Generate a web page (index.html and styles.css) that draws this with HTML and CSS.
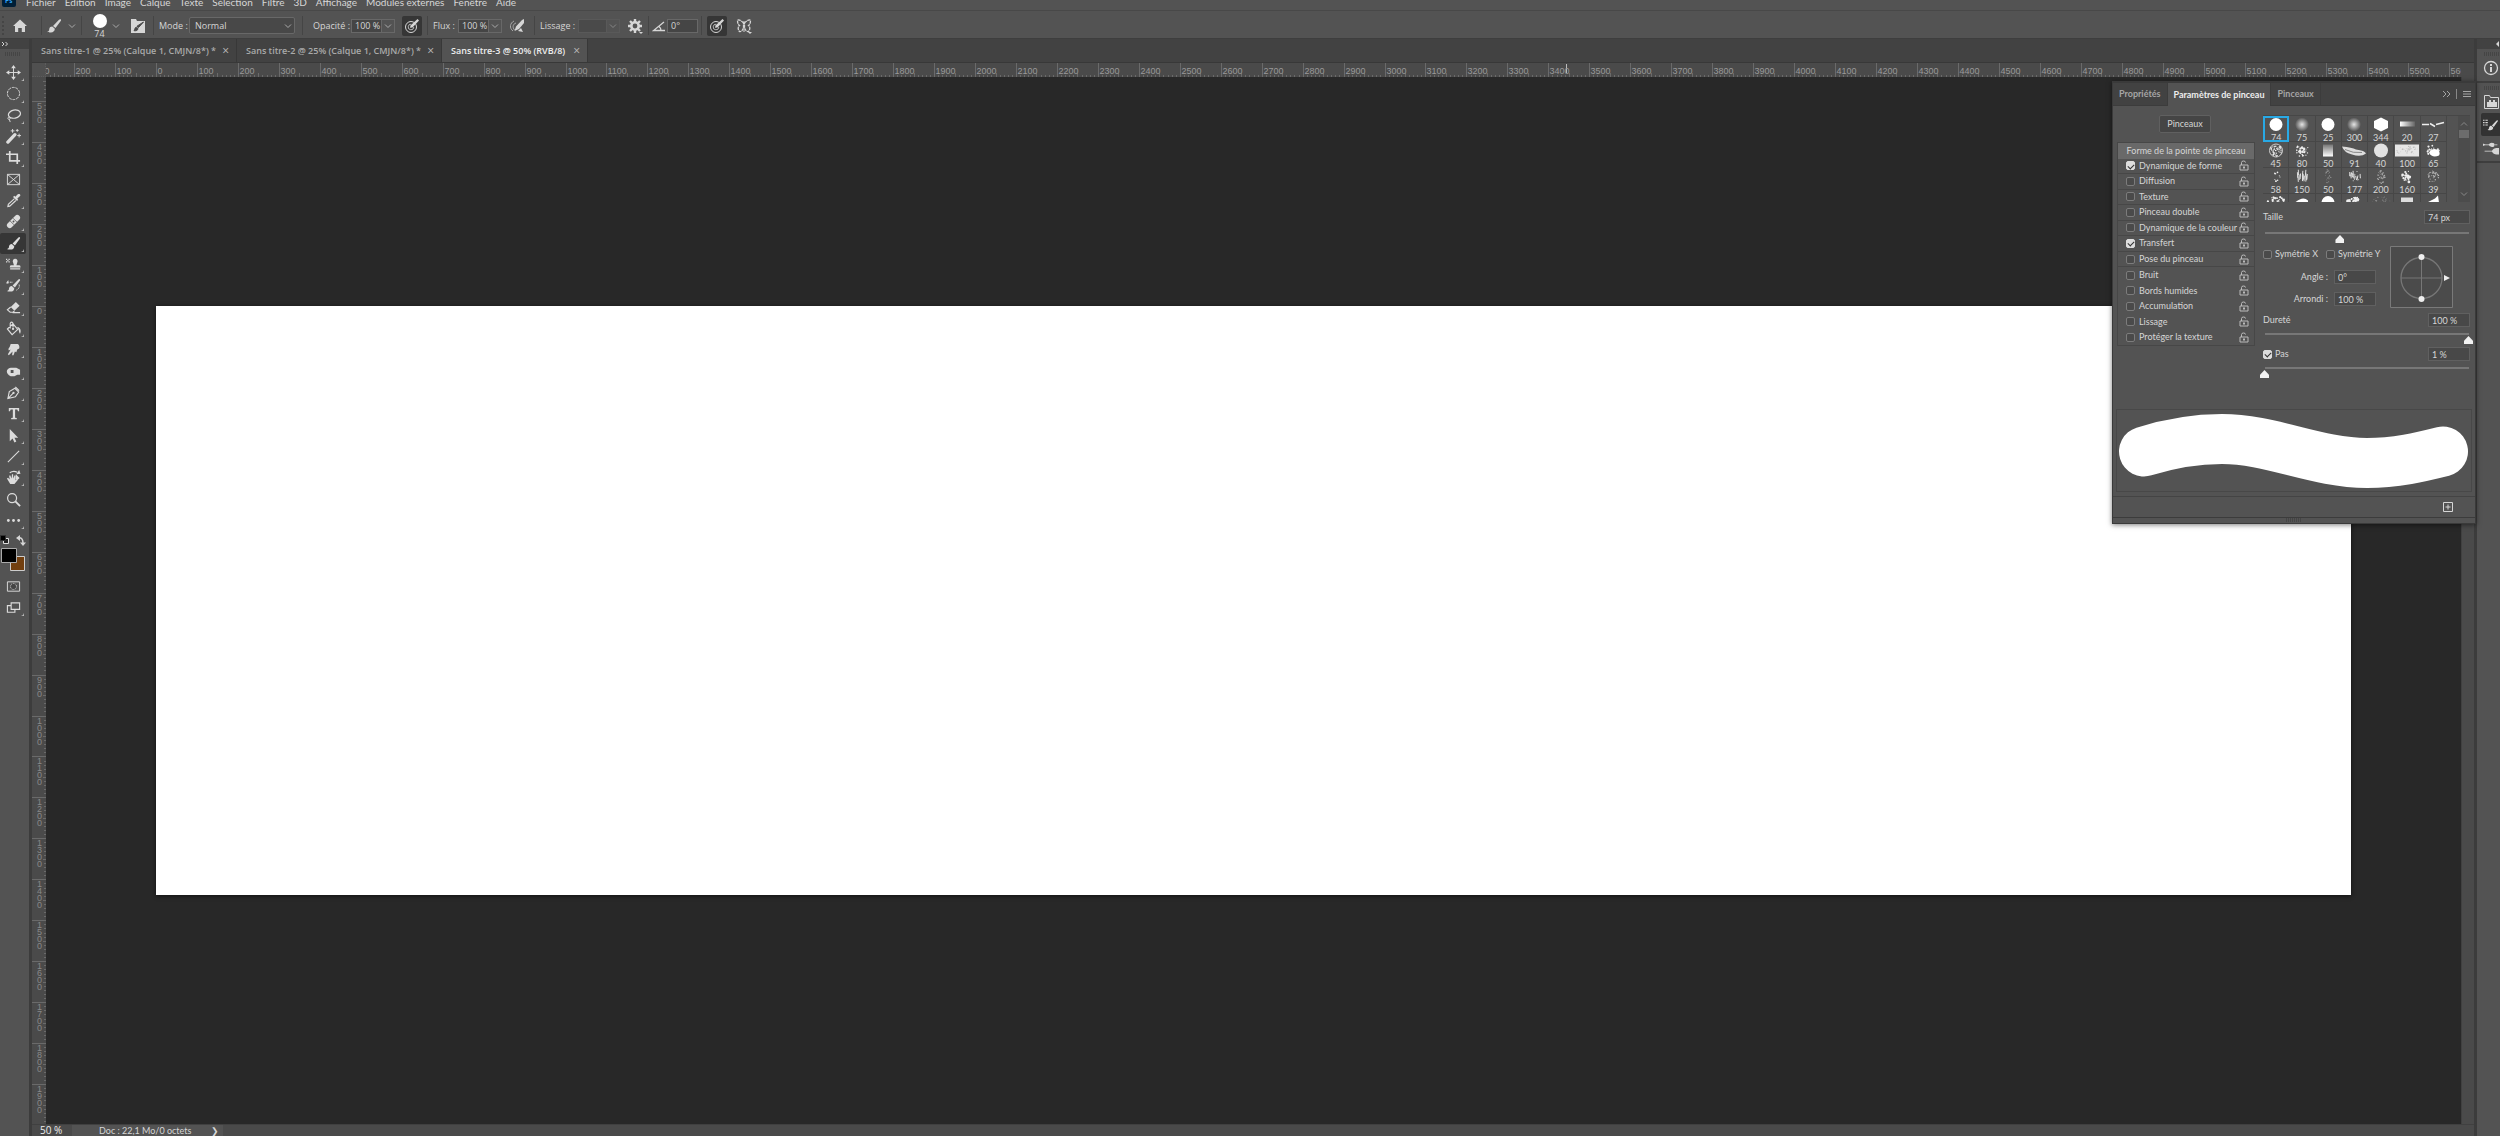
FILE: index.html
```html
<!DOCTYPE html>
<html lang="fr">
<head>
  <meta charset="UTF-8">
  <meta name="viewport" content="width=device-width, initial-scale=1.0">
  <title>Sans titre-3 @ 50% (RVB/8)</title>
  <link rel="stylesheet" href="styles.css">
</head>
<body>
  <svg class="defs" aria-hidden="true">
    <symbol id="chev" viewBox="0 0 8 8"><path d="M1 2.5 4 5.500 7 2.500" fill="none" stroke="currentColor"/></symbol>
    <symbol id="brush" viewBox="0 0 16 16"><path d="M14.500 1.200c.8.300.7 1 .2 1.700L9.500 10 7 8l6-6.200c.5-.5 1-.8 1.500-.6zM6.300 8.600l2.500 2.200c.2 2-1.500 3.700-4 3.700-1.300 0-2.800 0-3.500-.7C3.500 13 3 12 3.300 10.700c.3-1.400 1.700-2.200 3-2.100z"/></symbol>
    <symbol id="lock" viewBox="0 0 10 11"><path d="M1 5h8v5H1zM2.500 5V2.500Q2.500 1 4.500 1T6.500 2.500" fill="none" stroke="currentColor"/><path d="M4 6.500h2v2H4z"/></symbol>
    <symbol id="target" viewBox="0 0 16 16"><circle cx="7" cy="9" r="5.500" fill="none" stroke="currentColor"/><path d="M6 9.800 6.500 7.500 13.500 1l1.500 1.500L8.500 9.500z"/><path d="M9.800 9a2.800 2.800 0 1 1-2.500-2.800" fill="none" stroke="currentColor" stroke-width=".8"/></symbol>
  </svg>

  <nav class="menubar">
    <svg class="logo" viewBox="0 0 14 12"><rect width="14" height="12" rx="2" fill="#001e36"/><text x="3" y="8">Ps</text></svg>
    <ul>
      <li><a href="#">Fichier</a></li>
      <li><a href="#">Edition</a></li>
      <li><a href="#">Image</a></li>
      <li><a href="#">Calque</a></li>
      <li><a href="#">Texte</a></li>
      <li><a href="#">Sélection</a></li>
      <li><a href="#">Filtre</a></li>
      <li><a href="#">3D</a></li>
      <li><a href="#">Affichage</a></li>
      <li><a href="#">Modules externes</a></li>
      <li><a href="#">Fenêtre</a></li>
      <li><a href="#">Aide</a></li>
    </ul>
  </nav>

  <header class="options">
    <div class="group home">
      <button aria-label="Accueil"><svg viewBox="0 0 16 16"><path d="M8 1.500 15 8h-2v6H9.800v-4H6.200v4H3V8H1z"/></svg></button>
    </div>
    <div class="group tool">
      <button aria-label="Outil Pinceau"><svg viewBox="0 0 16 16"><use href="#brush"/></svg></button>
      <svg class="chev"><use href="#chev"/></svg>
    </div>
    <div class="group preset">
      <button class="tip" aria-label="Forme prédéfinie"><i></i><span>74</span></button>
      <svg class="chev"><use href="#chev"/></svg>
      <button aria-label="Paramètres de pinceau"><svg viewBox="0 0 16 16"><path d="M1 1h5l1 2h8v12H1z"/><path d="m13.500 4-5 5.500L7 8.200zM6.500 9.200 8 10.500c0 2-2 2.500-4 2.200 1-.7.500-3.500 2.500-3.500z" fill="#484848" stroke="#484848"/></svg></button>
    </div>
    <div class="group mode">
      <label for="mode">Mode :</label>
      <div class="select"><select id="mode"><option>Normal</option></select><svg class="chev"><use href="#chev"/></svg></div>
    </div>
    <div class="group opacity">
      <label for="opacity">Opacité :</label>
      <div class="combo"><input id="opacity" value="100 %"><button aria-label="Opacité"><svg class="chev"><use href="#chev"/></svg></button></div>
      <button class="on" aria-label="Pression sur l’opacité"><svg viewBox="0 0 16 16"><use href="#target"/></svg></button>
    </div>
    <div class="group flow">
      <label for="flow">Flux :</label>
      <div class="combo"><input id="flow" value="100 %"><button aria-label="Flux"><svg class="chev"><use href="#chev"/></svg></button></div>
      <button aria-label="Aérographe"><svg viewBox="0 0 16 16"><path d="M5 3C1 5 0 10 4 13M7 5C4 6 3 9 5.500 12" fill="none" stroke="#aaa"/><path d="M15 1 13 2 7 8.500 5.500 13 10 11l5-6zM12 10l2 4-5-1z"/></svg></button>
    </div>
    <div class="group smooth">
      <label for="smooth">Lissage :</label>
      <div class="combo off"><input id="smooth" disabled><button disabled aria-label="Lissage"><svg class="chev"><use href="#chev"/></svg></button></div>
      <button aria-label="Options de lissage"><svg viewBox="0 0 16 16"><circle cx="8" cy="8" r="3.700" fill="none" stroke="currentColor" stroke-width="2.600"/><path d="M8 1v3M8 12v3M1 8h3M12 8h3M3 3l2 2M11 11l2 2M3 13l2-2M11 5l2-2" stroke="currentColor" stroke-width="2.400"/><path d="M12 14h4l-2 2z"/></svg></button>
    </div>
    <div class="group angle">
      <label for="angle" aria-label="Angle"><svg viewBox="0 0 14 14"><path d="M12 3 1.500 11.500H13M7 7.500q2 1.500 2 4" fill="none" stroke="currentColor" stroke-width="1.300"/></svg></label>
      <input id="angle" value="0°">
    </div>
    <div class="group last">
      <button class="on" aria-label="Pression sur la taille"><svg viewBox="0 0 16 16"><use href="#target"/></svg></button>
      <button aria-label="Symétrie"><svg viewBox="0 0 16 16"><path d="M7.500 5C5 2 2 1.500 1.500 2.500c0 2 .5 4 2 5C1.500 9 2 12 3.500 13.500 5.500 14 7 12 7.500 9zM8.500 5c2.500-3 5.500-3.500 6-2.500 0 2-.5 4-2 5 2 1.500 1.500 4.500 0 6C10.500 14 9 12 8.500 9z" fill="none" stroke="currentColor" stroke-width="1.300" stroke-dasharray="3 .6"/><path d="M7.500 3h1v11h-1zM12 14h4l-2 2z"/></svg></button>
    </div>
  </header>

  <main class="workspace">
    <aside class="toolbar">
      <button class="collapse" aria-label="Agrandir">
        <svg viewBox="0 0 8 6"><path d="m1 1 2 2-2 2M4.500 1l2 2-2 2" fill="none" stroke="currentColor"/></svg>
      </button>
      <div class="grip"></div>
      <div class="tools">
        <button class="more" aria-label="Déplacement"><svg viewBox="0 0 16 16"><path d="M8 2v12M2 8h12" stroke="currentColor"/><path d="M8 0l2.500 3.500h-5zM8 16l2.500-3.500h-5zM0 8l3.500-2.500v5zM16 8l-3.500-2.500v5z"/></svg></button>
        <button class="more" aria-label="Ellipse de sélection"><svg viewBox="0 0 16 16"><circle cx="8" cy="8" r="6.500" fill="none" stroke="currentColor" stroke-dasharray="3 1"/></svg></button>
        <button class="more" aria-label="Lasso"><svg viewBox="0 0 16 16"><ellipse cx="9" cy="6.500" rx="6.500" ry="4.300" transform="rotate(-12 9 6.500)" fill="none" stroke="currentColor" stroke-width="1.300"/><path d="M3.500 9.500c-2 .5-2 3 0 2.500s1-2.500 0-2.500M3.500 12l1 3" fill="none" stroke="currentColor"/></svg></button>
        <button class="more" aria-label="Baguette magique"><svg viewBox="0 0 16 16"><path d="m2 14 7.500-8" stroke="currentColor" stroke-width="3.500" stroke-linecap="round"/><path d="M7 0v4M5 2h4M12 0v3M10.500 1.500h3M14 5v4M12 7h4" stroke="currentColor"/></svg></button>
        <button class="more" aria-label="Recadrage"><svg viewBox="0 0 16 16"><path d="M4 1v10.500h11M0 4.500h12V15" fill="none" stroke="currentColor" stroke-width="1.800"/></svg></button>
        <button aria-label="Image"><svg viewBox="0 0 16 16"><path d="M1.500 2.500h13v11h-13zM1.500 2.500l13 11M14.500 2.500l-13 11" fill="none" stroke="currentColor"/></svg></button>
        <button class="more" aria-label="Pipette"><svg viewBox="0 0 16 16"><path d="M15 1.500c-1-1-2.500-.5-3.500 1L10 4 8.800 3 7.500 4.300l4.200 4.200L13 7.200 12 6l1.500-1.500c1.500-1 2.300-2 1.500-3z"/><path d="m9 6-6.500 6L2 14.500l2-.5L10.500 8" fill="none" stroke="currentColor" stroke-width="1.200"/></svg></button>
        <button class="more" aria-label="Correcteur"><svg viewBox="0 0 16 16"><path d="m4 12 8-8" stroke="currentColor" stroke-width="6" stroke-linecap="round"/><path d="m4.500 7.500 4 4M7.500 4.500l4 4" stroke="#535353" stroke-width=".8"/><circle cx="8" cy="8" r="1" fill="#535353"/></svg></button>
        <button class="more on" aria-label="Pinceau"><svg viewBox="0 0 16 16"><use href="#brush"/></svg></button>
        <button class="more" aria-label="Tampon"><svg viewBox="-2 0 18 16"><path d="M9 1a3 3 0 0 1 2.500 4.500L10.500 9H14q1.500 0 1.500 2.500h-13Q2.500 9 4 9h3.500l-1-3.500A3 3 0 0 1 9 1zM3 12.500h12V14H3z"/><path d="M-2 1h1.500v1.500H-2zM1 1h1.500v1.500H1zM-.5 2.500H1V4H-.5zM-2 4h1.500v1.500H-2zM1 4h1.500v1.500H1z"/></svg></button>
        <button class="more" aria-label="Forme d’historique"><svg viewBox="0 0 16 16"><use href="#brush"/><path d="M1 4.500h6.500M14 7q1 4-3 6" fill="none" stroke="currentColor" stroke-dasharray="2 1"/><path d="M0 5.500 2.500 2v4z"/></svg></button>
        <button class="more" aria-label="Gomme"><svg viewBox="0 0 16 16"><path d="m10.500 2 4 4L9 11.500l-4-4z"/><path d="m5 7.500-3.500 3L4.500 13h3L9 11.500M7 13.500h8" fill="none" stroke="currentColor" stroke-width="1.200"/></svg></button>
        <button class="more" aria-label="Pot de peinture"><svg viewBox="0 0 16 16"><path d="m1.500 8.500 6-5.500 5 6-6 5.500zM4.500 8V2.500Q5.500 0 7.500 2.500V7" fill="none" stroke="currentColor" stroke-width="1.200"/><circle cx="7.500" cy="8.500" r="1.200"/><path d="M11.500 6.500c4 0 5 4 3.500 7-1.500-1-.5-4-3.500-7z"/></svg></button>
        <button class="more" aria-label="Doigt"><svg viewBox="0 0 16 16"><path d="M5 2h7.500Q15 3.500 14 7l-2 1-1 3-1.500-1L8 14H6.500l.5-4-4 4-1-1 3-5-2 1-.5-1.500L4 5z"/></svg></button>
        <button class="more" aria-label="Éponge"><svg viewBox="0 0 16 16"><path fill-rule="evenodd" d="M5 4h6l4 2v5.500h-3L9 13H5C-.5 11-.5 5 5 4zm0 2.500v3h3v-3z"/></svg></button>
        <button class="more" aria-label="Plume"><svg viewBox="0 0 16 16"><path d="M2 14.500 3.500 7l6-3.500 4 4L10 12.500zM2 14.500 8 8.500M10 2l4 4" fill="none" stroke="currentColor" stroke-width="1.200"/><circle cx="8" cy="8.500" r="1.200"/></svg></button>
        <button class="more" aria-label="Texte"><svg viewBox="0 0 16 16"><path d="M3 2h11v3.500h-1.200L12 3.800H9.700V12.500l1.800.4V14h-6v-1.100l1.800-.4V3.800H5l-.8 1.700H3z"/></svg></button>
        <button class="more" aria-label="Sélection de tracé"><svg viewBox="0 0 16 16"><path d="M4 1v13l3-2.800L9 15.500l2-1-2-4h4z"/></svg></button>
        <button class="more" aria-label="Trait"><svg viewBox="0 0 16 16"><path d="M2 14 14 2" stroke="currentColor" stroke-width="1.200"/></svg></button>
        <button class="more" aria-label="Rotation de l’affichage"><svg viewBox="0 0 16 16"><path d="M1 9l1.200-.8L4 10 3.300 6l1.200-.4L6 9l.3-4.500 1.300.1.100 4.400 1.500-3.500 1.100.5-.6 5L12 9.500l.8 1L9 15H4.500z"/><path d="M4 3q4-3 8-.5" fill="none" stroke="currentColor" stroke-width="1.300"/><path d="m11 4.500 4.500-.5L14 0zM10.500 4.500l4 4-2 2-2.500 0z"/></svg></button>
        <button aria-label="Zoom"><svg viewBox="0 0 16 16"><circle cx="6.500" cy="6.500" r="4.800" fill="none" stroke="currentColor" stroke-width="1.300"/><path d="m10 10 5 5" stroke="currentColor" stroke-width="2"/></svg></button>
        <button class="more" aria-label="Autres outils"><svg viewBox="0 0 16 16"><circle cx="2.500" cy="8" r="1.500"/><circle cx="8" cy="8" r="1.500"/><circle cx="13.500" cy="8" r="1.500"/></svg></button>
      </div>
      <button class="swatches" aria-label="Couleurs">
        <svg viewBox="0 0 28 40"><path d="M3.500 5.500h5v5h-5z" fill="#222" stroke="#ddd"/><path d="M.5 2.500h5v5h-5z" fill="#000" stroke="#333"/><path d="M18 5q5-1 5 5" fill="none" stroke="currentColor" stroke-width="1.500"/><path d="M16 5l4-3v6zM20 9.500h6L23 13z"/><path d="M10.500 23.500h14v14h-14z" fill="#723f0f" stroke="#ccc"/><path d="M1.500 15.500h15v14h-15z" fill="#000" stroke="#aaa"/></svg>
      </button>
      <div class="tools views">
        <button aria-label="Mode Masque"><svg viewBox="0 0 16 16"><path d="M1.500 3h13v10h-13z" fill="none" stroke="currentColor"/><circle cx="8" cy="8" r="3.200" fill="#444" stroke="currentColor" stroke-dasharray="1 1"/></svg></button>
        <button class="more" aria-label="Mode d’écran"><svg viewBox="0 0 16 16"><path d="M5.500 3h9v7h-9zM5 6H1.500v7h8v-2.500" fill="none" stroke="currentColor" stroke-width="1.200"/></svg></button>
      </div>
    </aside>

    <section class="document">
      <div class="tabs">
        <button>Sans titre-1 @ 25% (Calque 1, CMJN/8*) * <i>×</i></button>
        <button>Sans titre-2 @ 25% (Calque 1, CMJN/8*) * <i>×</i></button>
        <button class="active">Sans titre-3 @ 50% (RVB/8) <i>×</i></button>
      </div>
      <div class="corner"></div>
      <svg class="ruler horizontal" id="ruler-x"></svg>
      <svg class="ruler vertical" id="ruler-y"></svg>
      <div class="viewport" id="viewport"><div class="sheet" id="sheet"></div></div>
      <div class="scroll-y"></div>
      <footer class="status">
        <input aria-label="Zoom" value="50 %">
        <button>Doc : 22,1 Mo/0 octets <span>❯</span></button>
      </footer>
    </section>

    <aside class="dock">
      <div class="collapse"><svg viewBox="0 0 8 6"><path d="m7 0-3 3 3 3z"/></svg></div>
      <div class="dock-group">
        <div class="grip"></div>
        <button aria-label="Informations"><svg viewBox="0 0 16 16"><circle cx="8" cy="8" r="6.500" fill="none" stroke="currentColor" stroke-width="1.300"/><path d="M7 4h2v2H7zM7 7h2v5H7z"/></svg></button>
      </div>
      <div class="dock-group">
        <div class="grip"></div>
        <button aria-label="Bibliothèques"><svg viewBox="0 0 16 16"><path d="M1.500 14.500v-13h5l1 2h8v11z" fill="none" stroke="currentColor"/><path d="M4 8h2V6h2v2h2V6h2v2h2v5H4z"/></svg></button>
        <button class="on" aria-label="Paramètres de pinceau"><svg viewBox="0 0 20 16"><path d="M0 2h2M3 2h3M0 5h2M3 5h3M0 8h2M3 8h3" stroke="currentColor" stroke-width="1.400"/><use href="#brush" x="4" y="1" width="16" height="15"/></svg></button>
        <button aria-label="Pinceaux"><svg viewBox="0 0 20 16"><path d="M0 4h18M2 12h18" stroke="currentColor"/><path d="M0 2.500 3 4 0 5.500zM7 4q2-4 7-2v4q-5 2-7-2zM11 12q2-4 6-4h3v8h-3q-4 0-6-4z"/></svg></button>
      </div>
    </aside>

    <section class="panel">
      <div class="panel-tabs">
        <button>Propriétés</button>
        <button class="active">Paramètres de pinceau</button>
        <button>Pinceaux</button>
        <svg class="panel-menu" viewBox="0 0 30 12"><path d="m1 3 3 3-3 3M5 3l3 3-3 3" fill="none" stroke="currentColor"/><path d="M14.500 1v10" stroke="#888"/><path d="M21 3.500h8M21 6h8M21 8.500h8" stroke="currentColor"/></svg>
      </div>
      <div class="panel-body">
        <div class="settings">
          <button class="brushes-button">Pinceaux</button>
          <div class="setting-list">
            <button class="heading">Forme de la pointe de pinceau</button>
            <div class="line"><label><input type="checkbox" checked>Dynamique de forme</label><svg><use href="#lock"/></svg></div>
            <div class="line"><label><input type="checkbox">Diffusion</label><svg><use href="#lock"/></svg></div>
            <div class="line"><label><input type="checkbox">Texture</label><svg><use href="#lock"/></svg></div>
            <div class="line"><label><input type="checkbox">Pinceau double</label><svg><use href="#lock"/></svg></div>
            <div class="line"><label><input type="checkbox">Dynamique de la couleur</label><svg><use href="#lock"/></svg></div>
            <div class="line"><label><input type="checkbox" checked>Transfert</label><svg><use href="#lock"/></svg></div>
            <div class="line"><label><input type="checkbox">Pose du pinceau</label><svg><use href="#lock"/></svg></div>
            <div><label><input type="checkbox">Bruit</label><svg><use href="#lock"/></svg></div>
            <div><label><input type="checkbox">Bords humides</label><svg><use href="#lock"/></svg></div>
            <div><label><input type="checkbox">Accumulation</label><svg><use href="#lock"/></svg></div>
            <div><label><input type="checkbox">Lissage</label><svg><use href="#lock"/></svg></div>
            <div><label><input type="checkbox">Protéger la texture</label><svg><use href="#lock"/></svg></div>
          </div>
        </div>
        <div class="shape">
          <div class="brush-box">
            <div class="brush-grid" id="brushes"></div>
            <div class="brush-scroll"><svg viewBox="0 0 8 8"><path d="M1 5.500 4 2.500 7 5.500" fill="none" stroke="currentColor"/></svg><i></i><svg viewBox="0 0 8 8"><use href="#chev"/></svg></div>
          </div>
          <div class="field"><label for="size">Taille</label><input id="size" class="wide" value="74 px"></div>
          <input type="range" aria-label="Taille" value="37">
          <div class="tip-shape">
            <div class="tip-fields">
              <div class="checks">
                <label><input type="checkbox">Symétrie X</label>
                <label><input type="checkbox">Symétrie Y</label>
              </div>
              <div class="field"><label for="tip-angle">Angle :</label><input id="tip-angle" value="0°"></div>
              <div class="field"><label for="round">Arrondi :</label><input id="round" value="100 %"></div>
            </div>
            <svg class="dial" viewBox="0 0 63 62"><path d="M.5.5h62v61H.5z" fill="#4b4b4b" stroke="#7a7a7a"/><circle cx="31.500" cy="32" r="20.500" fill="none" stroke="#777" stroke-width="1.300"/><path d="M11 32h41M31.500 11v42" stroke="#777"/><circle cx="31.500" cy="11" r="3" fill="#eee"/><circle cx="31.500" cy="53" r="3" fill="#eee"/><path d="m54 29 6 3-6 3z" fill="#eee"/></svg>
          </div>
          <div class="field low"><label for="hardness">Dureté</label><input id="hardness" value="100 %"></div>
          <input type="range" aria-label="Dureté" value="100">
          <div class="field low"><label><input type="checkbox" checked>Pas</label><input aria-label="Pas" value="1 %"></div>
          <input type="range" aria-label="Pas" value="0">
        </div>
      </div>
      <svg class="preview" viewBox="1 0 354 81"><path d="M28 41.500C55 33 80 29 106 29c49 0 94 24 145 24 29 0 54-6 76-11.500" fill="none" stroke="#fff" stroke-width="50" stroke-linecap="round"/></svg>
      <div class="panel-foot"><button aria-label="Nouveau pinceau"><svg viewBox="0 0 10 10"><path d="M.5.500h9v9h-9zM5 2.500v5M2.500 5h5" fill="none" stroke="currentColor"/></svg></button></div>
      <div class="panel-grip"><i></i></div>
    </section>
  </main>

  <script src="script.js"></script>
</body>
</html>
```
FILE: styles.css
```css
* {
  box-sizing: border-box;
}
body {
  margin: 0;
  height: 100vh;
  display: flex;
  flex-direction: column;
  overflow: hidden;
  background: #535353;
  color: #d6d6d6;
  font: 9px/12px "Open Sans", "Noto Sans", sans-serif;
}
button, input, select {
  margin: 0;
  padding: 0;
  border: 0;
  border-radius: 0;
  background: none;
  color: inherit;
  font: inherit;
  outline: 0;
}
svg {
  display: block;
  flex: none;
  fill: currentColor;
}
a {
  color: inherit;
  text-decoration: none;
}
i {
  font-style: normal;
}
.defs {
  position: absolute;
  width: 0;
  height: 0;
}

/* menu */
.menubar {
  display: flex;
  flex: none;
  height: 11px;
  border-bottom: 1px solid #484848;
  font: 10px/12px Lato, "Open Sans", sans-serif;
}
.menubar ul {
  display: flex;
  align-items: flex-end;
  gap: 9px;
  margin: 0;
  padding: 0 0 2px 10px;
  list-style: none;
}
.logo {
  width: 14px;
  height: 12px;
  margin: -5px 0 0 2px;
}
.logo text {
  fill: #31a8ff;
  font-size: 7px;
  font-weight: bold;
}

/* options bar */
.options {
  display: flex;
  flex: none;
  height: 28px;
  padding-left: 2px;
  border-bottom: 1px solid #3e3e3e;
}
.group {
  display: flex;
  align-items: center;
  margin: 5px 0 3px;
  padding-left: 5px;
  border-right: 1px solid #454545;
}
.group button svg {
  width: 16px;
  height: 16px;
}
.group svg.chev, .chev {
  width: 8px;
  height: 8px;
  color: #aaa;
}
.home {
  width: 40px;
  padding-left: 8px;
  border-left: 2px dotted #454545;
}
.tool {
  width: 40px;
  padding-left: 4px;
}
.tool .chev {
  margin-left: 6px;
}
.preset {
  width: 72px;
}
.tip {
  width: 25px;
  line-height: 9px;
}
.tip i {
  display: block;
  width: 14px;
  height: 14px;
  margin: 0 auto 1px;
  border-radius: 50%;
  background: #fff;
}
.preset .chev {
  margin: 0 10px 0 0;
}
.mode {
  width: 149px;
}
.mode label {
  width: 30px;
}
.select {
  display: flex;
  align-items: center;
  width: 106px;
  height: 17px;
  padding: 0 2px 0 5px;
  border: 1px solid #686868;
  border-radius: 2px;
  background: #484848;
}
.select select {
  flex: 1;
  appearance: none;
}
.opacity {
  width: 125px;
  padding-left: 10px;
}
.opacity label {
  width: 38px;
}
.combo {
  display: flex;
  height: 14px;
  margin-right: 7px;
}
.combo input, #angle {
  width: 31px;
  height: 14px;
  padding-left: 3px;
  border: 1px solid #686868;
  background: #454545;
}
.combo button {
  display: grid;
  place-items: center;
  width: 13px;
  border: 1px solid #686868;
  border-left: 0;
}
.combo.off input, .combo.off button {
  border-color: #5e5e5e;
  opacity: .6;
}
.group .on {
  display: grid;
  place-items: center;
  width: 20px;
  height: 20px;
  border-radius: 2px;
  background: #363636;
}
.flow {
  width: 107px;
}
.flow label {
  width: 25px;
}
.smooth {
  width: 114px;
}
.smooth label {
  width: 38px;
}
.combo.off input {
  width: 29px;
}
.angle {
  width: 53px;
  padding-left: 3px;
}
.angle label svg {
  width: 14px;
  height: 14px;
  margin-right: 1px;
}
.last {
  gap: 9px;
  border: 0;
}

/* workspace */
.workspace {
  position: relative;
  display: grid;
  grid-template-columns: 29px minmax(0, 1fr) 23px;
  column-gap: 3px;
  flex: 1;
  min-height: 0;
  background: #3c3c3c;
}
.toolbar {
  background: #535353;
}
.collapse {
  display: flex;
  align-items: center;
  width: 100%;
  height: 10px;
  padding-left: 1px;
  background: #424242;
}
.collapse svg {
  width: 8px;
  height: 6px;
}
.grip {
  width: 16px;
  height: 4px;
  margin: 3px 0 6px 5px;
  background: repeating-linear-gradient(90deg, #454545 0 1px, #535353 1px 2px);
}
.tools {
  display: grid;
  grid-template-rows: repeat(22, 1fr);
  width: 26px;
  height: 469px;
  color: #dcdcdc;
}
.tools button {
  position: relative;
  display: grid;
  place-items: center;
  border-radius: 2px;
}
.tools svg {
  width: 15px;
  height: 15px;
}
.tools .on {
  background: #363636;
}
.more::after {
  content: "";
  position: absolute;
  right: 2px;
  bottom: 2px;
  border: solid transparent;
  border-width: 2px 1px 1px 2px;
  border-right-color: #bbb;
  border-bottom-color: #bbb;
}
.swatches {
  display: block;
  margin-top: 2px;
}
.swatches svg {
  width: 28px;
  height: 40px;
}
.views {
  grid-template-rows: 1fr 1fr;
  height: 42px;
  margin-top: 3px;
}

/* document */
.document {
  display: grid;
  grid-template: 24px 14px minmax(0, 1fr) 12px / 14px minmax(0, 1fr) 13px;
  background: #4a4a4a;
}
.tabs {
  display: flex;
  grid-column: 1 / -1;
  border-bottom: 1px solid #383838;
  background: #424242;
}
.tabs button {
  display: flex;
  justify-content: space-between;
  align-items: center;
  width: 205px;
  padding: 0 7px 0 9px;
  border-right: 1px solid #383838;
  color: #aaa;
  font-size: 9px;
  font-weight: 600;
  white-space: nowrap;
}
.tabs .active {
  width: 146px;
  background: #535353;
  color: #eee;
}
.tabs i {
  color: #bbb;
  font-size: 12px;
  font-weight: normal;
}
.corner {
  grid-area: 2 / 1;
  background: #505050;
  border: dotted #5c5c5c;
  border-width: 0 1px 1px 0;
}
.ruler {
  width: 100%;
  height: 100%;
  fill: #999;
  font: 9px "Liberation Sans Narrow", "Liberation Sans", sans-serif;
  overflow: hidden;
}
.ruler.horizontal {
  grid-area: 2 / 2;
}
.ruler.vertical {
  grid-area: 3 / 1;
  fill: #888;
}
.ruler path {
  fill: none;
  stroke: #6a6a6a;
}
.ruler .cursor {
  stroke: #bbb;
}
.viewport {
  grid-area: 3 / 2;
  display: grid;
  place-items: center;
  background: #282828;
}
.sheet {
  width: calc(100% - 220px);
  aspect-ratio: 2195 / 589;
  background: #fff;
  box-shadow: 0 1px 4px #111;
}
.scroll-y {
  grid-area: 3 / 3;
  border-left: 1px solid #404040;
}
.status {
  display: flex;
  grid-area: 4 / 1 / 5 / -1;
  border-top: 1px solid #404040;
  line-height: 11px;
}
.status input {
  width: 40px;
  padding-left: 8px;
  color: #eee;
  font-size: 10px;
}
.status button {
  display: flex;
  justify-content: space-between;
  width: 151px;
  padding: 0 4px 0 27px;
  background: #535353;
  font-family: Lato, "Open Sans", sans-serif;
}

/* right dock */
.dock {
  overflow: hidden;
  background: #535353;
}
.dock .collapse {
  justify-content: flex-end;
  padding: 0;
}
.dock-group {
  padding: 0 0 2px 4px;
  border-bottom: 2px solid #3e3e3e;
}
.dock .grip {
  margin: 3px 0 0 3px;
}
.dock button {
  display: flex;
  align-items: center;
  width: 20px;
  height: 23px;
  padding-left: 2px;
  overflow: hidden;
  border-radius: 2px;
}
.dock button svg {
  width: 16px;
  height: 16px;
}
.dock .on {
  background: #333;
}

/* brush settings panel */
.panel {
  position: absolute;
  top: 42px;
  right: 24px;
  width: 364px;
  border: 1px solid #3a3a3a;
  border-top-width: 2px;
  background: #535353;
  box-shadow: 0 1px 5px rgba(0, 0, 0, .5);
  font-family: Lato, "Open Sans", sans-serif;
}
.panel-tabs {
  display: flex;
  height: 23px;
  border-bottom: 1px solid #3c3c3c;
  background: #424242;
  color: #a5a5a5;
  font-weight: 700;
}
.panel-tabs button {
  padding: 0 6px;
  border-right: 1px solid #3c3c3c;
}
.panel-tabs .active {
  margin-bottom: -1px;
  background: #535353;
  color: #eee;
}
.panel-menu {
  width: 30px;
  height: 12px;
  margin: 5px 3px 0 auto;
}
.panel-body {
  display: flex;
  justify-content: space-between;
  padding: 9px 5px 0 4px;
}
.settings {
  width: 138px;
}
.brushes-button {
  display: block;
  width: 52px;
  height: 18px;
  margin: 0 auto 9px 42px;
  border: 1px solid #606060;
  border-radius: 2px;
  background: #454545;
}
.setting-list {
  display: grid;
  grid-template: repeat(13, 1fr) / minmax(0, 1fr);
  height: 204px;
  border: 1px solid #474747;
}
.heading {
  background: #696969;
}
.setting-list div {
  display: flex;
  align-items: center;
  justify-content: space-between;
  padding: 0 5px 0 8px;
}
.setting-list .line {
  border-bottom: 1px solid #474747;
}
.setting-list svg {
  width: 10px;
  height: 11px;
  color: #bbb;
}
.panel label {
  display: flex;
  align-items: center;
  white-space: nowrap;
}
input[type="checkbox"] {
  display: grid;
  place-items: center;
  width: 9px;
  height: 9px;
  margin-right: 4px;
  appearance: none;
  border: 1px solid #7c7c7c;
  border-radius: 2px;
  background: #4a4a4a;
}
input[type="checkbox"]:checked {
  border-color: #ddd;
  background: #ddd;
}
input[type="checkbox"]:checked::after {
  content: "";
  width: 5px;
  height: 3px;
  border: solid #333;
  border-width: 0 0 1px 1px;
  transform: rotate(-45deg);
}
.shape {
  width: 207px;
}
.shape input[type="checkbox"] {
  margin-right: 3px;
}
.brush-box {
  display: flex;
  justify-content: space-between;
  height: 87px;
  margin-bottom: 8px;
  overflow: hidden;
  border-top: 1px solid #474747;
}
.brush-grid {
  display: grid;
  grid-template-columns: repeat(7, 1fr);
  grid-auto-rows: 26px;
  width: 184px;
}
.brush-grid button {
  display: flex;
  flex-direction: column;
  align-items: center;
  border: solid #474747;
  border-width: 0 1px 1px 0;
  line-height: 9px;
  overflow: hidden;
}
.brush-grid svg {
  width: 24px;
  height: 17px;
}
.brush-grid .selected {
  border: 1px solid #29a9e5;
  outline: 1px solid #29a9e5;
  outline-offset: -2px;
}
.brush-grid .selected svg {
  margin-top: -1px;
}
.brush-scroll {
  display: flex;
  flex-direction: column;
  align-items: center;
  width: 12px;
  padding: 4px 0;
  background: #4c4c4c;
  color: #888;
}
.brush-scroll svg {
  width: 8px;
  height: 8px;
}
.brush-scroll i {
  width: 10px;
  height: 8px;
  margin: 2px 0 auto;
  background: #6c6c6c;
}
.field {
  display: flex;
  align-items: center;
  justify-content: space-between;
  height: 14px;
}
.field > input {
  width: 42px;
  height: 14px;
  padding-left: 3px;
  border: 1px solid #606060;
  background: #484848;
}
.field > .wide {
  width: 46px;
}
input[type="range"] {
  display: block;
  width: calc(100% + 6px);
  height: 11px;
  margin: 8px -3px 3px;
  appearance: none;
}
input[type="range"]::-webkit-slider-runnable-track {
  height: 11px;
  background: linear-gradient(#777, #777) 50% 0 / calc(100% - 9px) 2px no-repeat;
}
input[type="range"]::-webkit-slider-thumb {
  width: 9px;
  height: 8px;
  margin-top: 3px;
  appearance: none;
  background: #f2f2f2;
  clip-path: polygon(50% 0, 100% 60%, 100% 100%, 0 100%, 0 60%);
}
.low + input[type="range"] {
  margin-top: 6px;
}
.tip-shape {
  display: flex;
  justify-content: space-between;
  padding-right: 17px;
  margin-bottom: 5px;
}
.checks {
  display: flex;
  gap: 8px;
  height: 16px;
}
.tip-fields .field {
  justify-content: flex-end;
  gap: 6px;
  width: 113px;
  margin-top: 8px;
}
.dial {
  width: 63px;
  height: 62px;
}
.preview {
  width: 356px;
  height: 83px;
  margin: 28px 0 4px 3px;
  border: 1px solid #484848;
}
.panel-foot {
  display: flex;
  justify-content: flex-end;
  align-items: center;
  height: 21px;
  padding-right: 22px;
  border-top: 1px solid #444;
}
.panel-foot svg {
  width: 10px;
  height: 10px;
}
.panel-grip {
  height: 6px;
  border-top: 1px solid #3c3c3c;
}
.panel-grip i {
  display: block;
  width: 16px;
  height: 4px;
  margin: 0 auto;
  background: repeating-linear-gradient(90deg, #454545 0 1px, #535353 1px 2px);
}
```
FILE: script.js
```js
const UNITS = 5360; // document width in pixels

function drawRulers() {
  const view = document.getElementById("viewport").getBoundingClientRect();
  const sheet = document.getElementById("sheet").getBoundingClientRect();
  const scale = sheet.width / UNITS;
  const left = sheet.left - view.left;
  const top = sheet.top - view.top;

  let path = "";
  let labels = "";
  for (let u = Math.ceil(-left / scale / 10) * 10 - 40; u * scale + left < view.width; u += 10) {
    const x = Math.round(left + u * scale) + 0.5;
    path += `M${x} ${u % 100 === 0 ? 0 : u % 50 === 0 ? 10 : 12}V14`;
    if (u % 100 === 0) labels += `<text x="${x + 1}" y="11">${Math.abs(u)}</text>`;
  }
  const cursor = Math.round(left + 3443 * scale) + 0.5;
  document.getElementById("ruler-x").innerHTML =
    `<path d="${path}"/><path class="cursor" d="M${cursor} 1V10"/>${labels}`;

  path = "";
  labels = "";
  for (let u = Math.ceil(-top / scale / 10) * 10; u * scale + top < view.height; u += 10) {
    const y = Math.round(top + u * scale) + 0.5;
    path += `M${u % 100 === 0 ? 0 : u % 50 === 0 ? 11 : 12} ${y}H14`;
    if (u % 100 === 0) {
      String(Math.abs(u)).split("").forEach((digit, i) => {
        labels += `<text x="5" y="${y + 7 + i * 7}">${digit}</text>`;
      });
    }
  }
  document.getElementById("ruler-y").innerHTML = `<path d="${path}"/>${labels}`;
}

let seed = 7;
function random() {
  seed = (seed * 16807) % 2147483647;
  return seed / 2147483647;
}

// scattered specks inside an ellipse
function specks(count, rx, ry, size, color) {
  let out = "";
  for (let i = 0; i < count; i++) {
    const a = random() * Math.PI * 2;
    const r = Math.sqrt(random());
    const x = 12 + Math.cos(a) * r * rx;
    const y = 8 + Math.sin(a) * r * ry;
    out += `<circle cx="${x.toFixed(1)}" cy="${y.toFixed(1)}" r="${(size * (0.4 + random() * 0.6)).toFixed(1)}" fill="${color || "#eee"}"/>`;
  }
  return out;
}

function strokes(count, rx, ry) {
  let d = "";
  for (let i = 0; i < count; i++) {
    const x = 12 + (random() * 2 - 1) * rx;
    const y = 5 + (random() * 2 - 1) * ry * 0.5;
    d += `M${x.toFixed(1)} ${y.toFixed(1)}l${(random() * 2 - 1).toFixed(1)} ${(ry * 0.7).toFixed(1)}`;
  }
  return `<path d="${d}" stroke="#ddd" fill="none"/>`;
}

const soft = `<radialGradient id="soft"><stop offset="0" stop-color="#e4e4e4"/><stop offset="1" stop-color="#e4e4e4" stop-opacity="0"/></radialGradient>
  <linearGradient id="fade"><stop offset="0" stop-color="#fff"/><stop offset="1" stop-color="#fff" stop-opacity=".1"/></linearGradient>
  <linearGradient id="rise" x2="0" y2="1"><stop offset="0" stop-color="#fff" stop-opacity=".2"/><stop offset="1" stop-color="#fff"/></linearGradient>`;
const round = `<circle cx="12" cy="8" r="6.500" fill="#fff"/>`;
const softRound = `<defs>${soft}</defs><circle cx="12" cy="8" r="7" fill="url(#soft)"/>`;

const brushes = [
  ["74", round],
  ["75", softRound],
  ["25", round],
  ["300", softRound],
  ["344", `<path d="M12 1l7 3.500v7L12 15l-7-3.500v-7z" fill="#fff"/>`],
  ["20", `<path d="M5 5h15v5H5z" fill="url(#fade)"/>`],
  ["27", `<path d="M1 8h7M9 7l5 3M15 8l8-2" stroke="#eee" stroke-width="1.500"/>`],
  ["45", `<circle cx="12" cy="8" r="6.500" fill="none" stroke="#ccc"/>` + specks(55, 6, 6, .8)],
  ["80", specks(30, 7, 6, .8) + specks(14, 3, 3, 1.2)],
  ["50", `<path d="M7 2h10v12H7z" fill="url(#rise)"/>`],
  ["91", `<path d="M0 4q10 1 14 3 9 1 10 4-5 4-14 1Q2 10 0 4z" fill="#ddd"/><path d="M3 7q8 4 17 3" stroke="#888" fill="none"/>`],
  ["40", `<circle cx="12" cy="8" r="7" fill="#e2e2e2"/>`],
  ["100", `<path d="M0 2h24v12H0z" fill="#e6e6e6"/>` + specks(30, 11, 5, .8, "#bbb")],
  ["65", specks(16, 6, 6, 1.3) + `<path d="M8 10q3-5 8-3 4 3 2 6-7 3-10-3z" fill="#fff"/>`],
  ["58", specks(10, 4, 5, .9)],
  ["150", strokes(15, 6, 8)],
  ["50", specks(25, 3, 7, .7, "#999")],
  ["177", strokes(10, 7, 6) + specks(12, 7, 6, .6)],
  ["200", specks(35, 4, 7, .8, "#aaa")],
  ["160", specks(22, 5, 6, 1.5)],
  ["39", specks(40, 6, 6, .8, "#bbb")],
  ["", specks(45, 10, 6, 1.2)],
  ["", `<path d="M5 8q8-7 13-2v9H5z" fill="#fff"/>`],
  ["", round],
  ["", specks(40, 7, 6, 1.3)],
  ["", specks(35, 10, 6, .7, "#888")],
  ["", `<path d="M6 3h12v9H6z" fill="#ddd"/>`],
  ["", `<path d="M6 8l8-4 3-3 2 14H6z" fill="#fff"/>`]
];

document.getElementById("brushes").innerHTML = brushes.map(([size, art], i) =>
  `<button${i === 0 ? ' class="selected"' : ""}><svg viewBox="0 0 24 16">${art}</svg>${size}</button>`
).join("");

drawRulers();
window.addEventListener("resize", drawRulers);
```
